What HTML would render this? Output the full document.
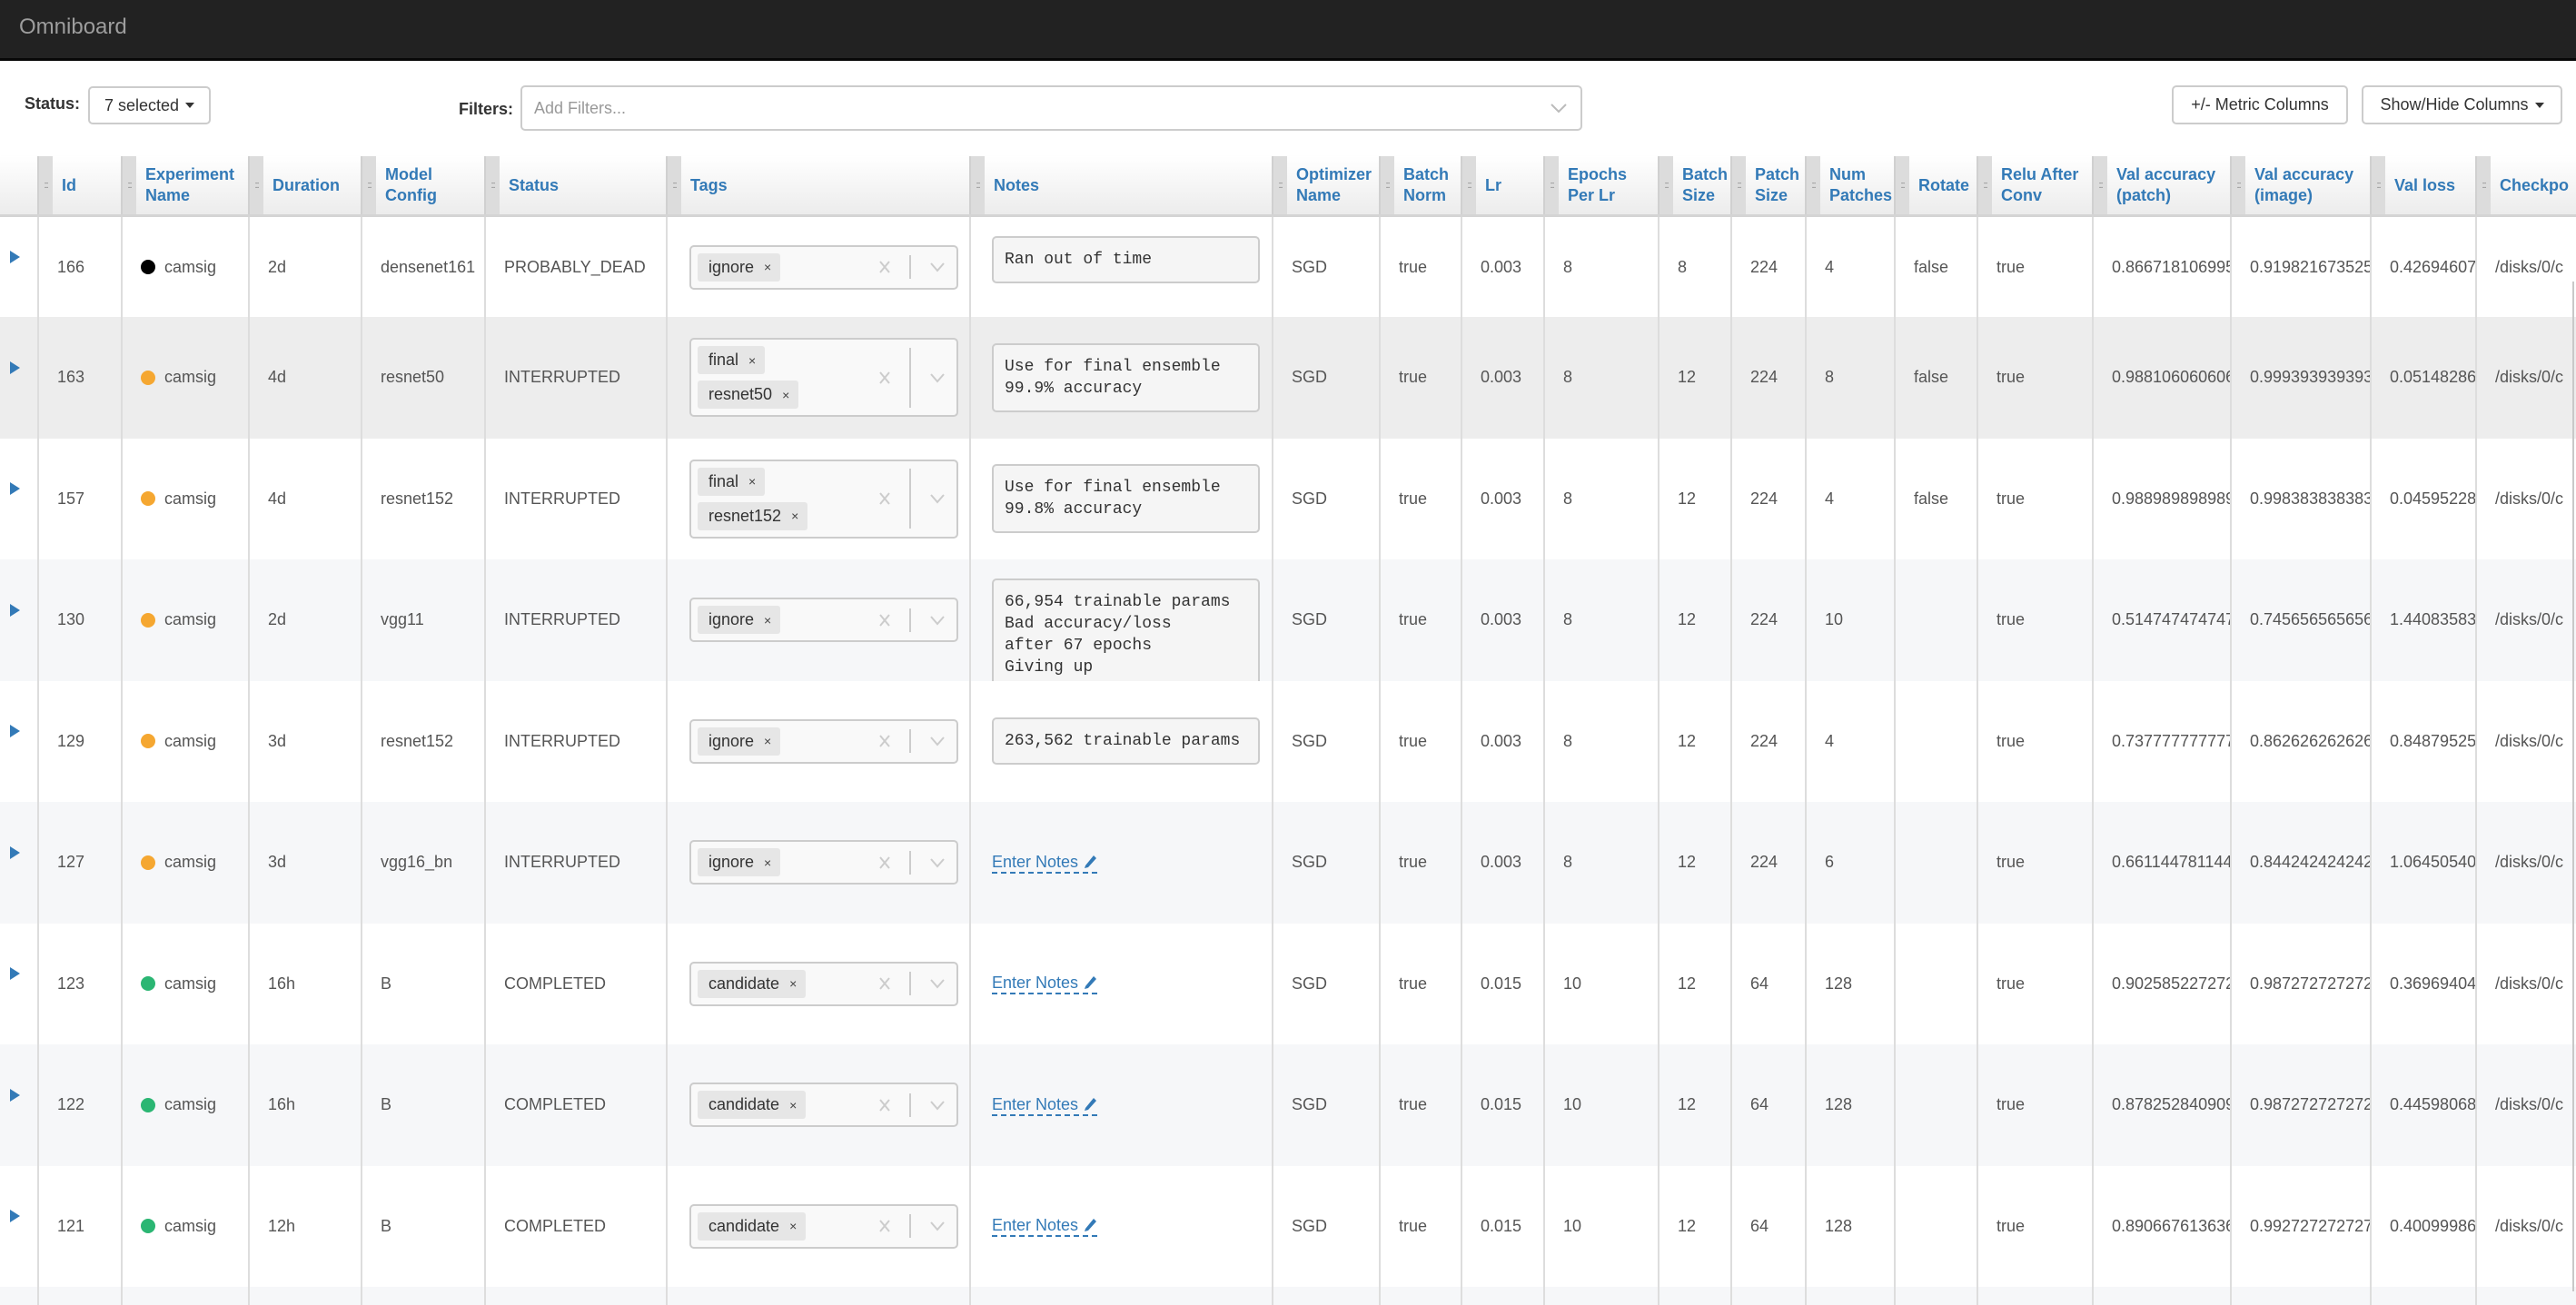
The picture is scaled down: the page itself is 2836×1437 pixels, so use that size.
<!DOCTYPE html>
<html><head><meta charset="utf-8">
<style>
*{box-sizing:border-box}
body{margin:0;width:2836px;height:1422px;overflow:hidden;background:#fff;font-family:"Liberation Sans",Arial,sans-serif;position:relative}
.nav{position:absolute;left:0;top:0;width:2836px;height:67px;background:#222;border-bottom:3px solid #080808}
.nav span{position:absolute;left:21px;top:16px;font-size:24px;color:#9d9d9d}
.lbl{position:absolute;font-weight:bold;font-size:18px;color:#333}
.btn{position:absolute;border:2px solid #ccc;border-radius:5px;background:#fff;font-size:18px;color:#333;display:flex;align-items:center;justify-content:center}
.caret{display:inline-block;width:0;height:0;border-left:5px solid transparent;border-right:5px solid transparent;border-top:6px solid #333;margin-left:7px}
.filt{position:absolute;left:573px;top:94px;width:1169px;height:50px;border:2px solid #ccc;border-radius:5px;background:#fff;font-size:18px;color:#999;padding-left:13px;display:flex;align-items:center}
.hdr{position:absolute;left:0;top:172px;width:2836px;height:67px;background:linear-gradient(#fff,#ececec);border-bottom:3px solid #d4d4d4;display:flex;box-shadow:0 2px 3px rgba(0,0,0,.08)}
.h{flex:none;display:flex;height:100%;overflow:hidden;white-space:nowrap}
.h .g{width:17px;flex:none;background:#dcdcdc;border-left:2px solid #d0d0d0;display:flex;align-items:center;justify-content:center;color:#777;font-size:11px;letter-spacing:-1px}
.h .t{padding-left:10px;display:flex;align-items:center;font-weight:bold;font-size:18px;line-height:23px;color:#337ab7;white-space:normal}
.rows{position:absolute;left:0;top:239px;width:2836px}
.r{display:flex;height:133.5px;overflow:hidden}
.c{flex:none;border-left:2px solid #ddd;padding-left:20px;display:flex;align-items:center;overflow:hidden;white-space:nowrap;font-size:18px;color:#555;height:100%}
.c0{border-left:none;padding-left:11px}
.w0{width:41px}.w1{width:92px}.w2{width:140px}.w3{width:124px}.w4{width:136px}.w5{width:200px}.w6{width:334px}.w7{width:333px}.w8{width:118px}.w9{width:90px}.w10{width:91px}.w11{width:126px}.w12{width:80px}.w13{width:82px}.w14{width:98px}.w15{width:91px}.w16{width:127px}.w17{width:152px}.w18{width:154px}.w19{width:116px}.w20{width:111px}
.tri{width:0;height:0;border-top:7px solid transparent;border-bottom:7px solid transparent;border-left:11px solid #337ab7;margin-top:-22px}
.dot{display:inline-block;width:16px;height:16px;border-radius:50%;margin-right:10px}
.sel{width:296px;margin-left:4px;border:2px solid #ccc;border-radius:5px;background:#f9f9f9;display:flex;align-items:center;position:relative;padding:7px 0 7px 7px}
.chips{flex:1;display:flex;flex-direction:column;gap:7px;align-items:flex-start}
.chip{background:#e6e6e6;border-radius:3px;height:31px;padding:0 10px 0 12px;display:flex;align-items:center;font-size:18px;color:#333}
.chip b{font-weight:normal;font-size:14px;margin-left:11px;color:#444}
.ind{display:flex;align-items:center;width:86px;justify-content:space-between;padding-right:12px;height:100%}
.sep{width:2px;height:26px;background:#ccc}
.note{margin-left:3px;width:295px;background:#f5f5f5;border:2px solid #ccc;border-radius:5px;padding:12px 12px;font-family:"Liberation Mono",monospace;font-size:18px;line-height:24px;color:#333;white-space:pre}
.en{color:#337ab7;border-bottom:2px dashed #337ab7;margin-left:3px;line-height:22px;display:flex;align-items:center}
</style></head><body>
<div class="nav"><span>Omniboard</span></div>
<div class="lbl" style="left:27px;top:104px">Status:</div>
<div class="btn" style="left:97px;top:95px;width:135px;height:42px">7 selected<span class="caret"></span></div>
<div class="lbl" style="left:505px;top:110px">Filters:</div>
<div class="filt">Add Filters...<svg style="position:absolute;right:14px;top:16px" width="20" height="14" viewBox="0 0 20 14"><polyline points="2,3 10,11 18,3" fill="none" stroke="#bbb" stroke-width="2"/></svg></div>
<div class="btn" style="left:2391px;top:94px;width:194px;height:43px">+/- Metric Columns</div>
<div class="btn" style="left:2600px;top:94px;width:221px;height:43px">Show/Hide Columns<span class="caret"></span></div>

<div class="hdr">
<div class="h w0"></div>
<div class="h w1"><div class="g">::</div><div class="t">Id</div></div>
<div class="h w2"><div class="g">::</div><div class="t">Experiment<br>Name</div></div>
<div class="h w3"><div class="g">::</div><div class="t">Duration</div></div>
<div class="h w4"><div class="g">::</div><div class="t">Model<br>Config</div></div>
<div class="h w5"><div class="g">::</div><div class="t">Status</div></div>
<div class="h w6"><div class="g">::</div><div class="t">Tags</div></div>
<div class="h w7"><div class="g">::</div><div class="t">Notes</div></div>
<div class="h w8"><div class="g">::</div><div class="t">Optimizer<br>Name</div></div>
<div class="h w9"><div class="g">::</div><div class="t">Batch<br>Norm</div></div>
<div class="h w10"><div class="g">::</div><div class="t">Lr</div></div>
<div class="h w11"><div class="g">::</div><div class="t">Epochs<br>Per Lr</div></div>
<div class="h w12"><div class="g">::</div><div class="t">Batch<br>Size</div></div>
<div class="h w13"><div class="g">::</div><div class="t">Patch<br>Size</div></div>
<div class="h w14"><div class="g">::</div><div class="t">Num<br>Patches</div></div>
<div class="h w15"><div class="g">::</div><div class="t">Rotate</div></div>
<div class="h w16"><div class="g">::</div><div class="t">Relu After<br>Conv</div></div>
<div class="h w17"><div class="g">::</div><div class="t">Val accuracy<br>(patch)</div></div>
<div class="h w18"><div class="g">::</div><div class="t">Val accuracy<br>(image)</div></div>
<div class="h w19"><div class="g">::</div><div class="t">Val loss</div></div>
<div class="h w20"><div class="g">::</div><div class="t">Checkpo</div></div>
</div>

<div class="rows">
<!-- 166 -->
<div class="r" style="height:110px;background:#fff">
<div class="c c0 w0"><i class="tri"></i></div><div class="c w1">166</div><div class="c w2"><i class="dot" style="background:#000"></i>camsig</div><div class="c w3">2d</div><div class="c w4">densenet161</div><div class="c w5">PROBABLY_DEAD</div>
<div class="c w6"><div class="sel"><div class="chips"><span class="chip">ignore<b>×</b></span></div><div class="ind"><svg width="14" height="16"><path d="M2 2L12 14M12 2L2 14" stroke="#ccc" stroke-width="2"/></svg><span class="sep"></span><svg width="18" height="12"><polyline points="2,2 9,10 16,2" fill="none" stroke="#ccc" stroke-width="2"/></svg></div></div></div>
<div class="c w7" style="align-items:flex-start;padding-top:21px"><div class="note">Ran out of time</div></div>
<div class="c w8">SGD</div><div class="c w9">true</div><div class="c w10">0.003</div><div class="c w11">8</div><div class="c w12">8</div><div class="c w13">224</div><div class="c w14">4</div><div class="c w15">false</div><div class="c w16">true</div><div class="c w17">0.866718106995</div><div class="c w18">0.919821673525</div><div class="c w19">0.42694607</div><div class="c w20">/disks/0/c</div>
</div>
<!-- 163 -->
<div class="r" style="background:#ededed">
<div class="c c0 w0"><i class="tri"></i></div><div class="c w1">163</div><div class="c w2"><i class="dot" style="background:#f5a731"></i>camsig</div><div class="c w3">4d</div><div class="c w4">resnet50</div><div class="c w5">INTERRUPTED</div>
<div class="c w6"><div class="sel"><div class="chips"><span class="chip">final<b>×</b></span><span class="chip">resnet50<b>×</b></span></div><div class="ind"><svg width="14" height="16"><path d="M2 2L12 14M12 2L2 14" stroke="#ccc" stroke-width="2"/></svg><span class="sep" style="height:66px"></span><svg width="18" height="12"><polyline points="2,2 9,10 16,2" fill="none" stroke="#ccc" stroke-width="2"/></svg></div></div></div>
<div class="c w7"><div class="note">Use for final ensemble
99.9% accuracy</div></div>
<div class="c w8">SGD</div><div class="c w9">true</div><div class="c w10">0.003</div><div class="c w11">8</div><div class="c w12">12</div><div class="c w13">224</div><div class="c w14">8</div><div class="c w15">false</div><div class="c w16">true</div><div class="c w17">0.988106060606</div><div class="c w18">0.999393939393</div><div class="c w19">0.05148286</div><div class="c w20">/disks/0/c</div>
</div>
<!-- 157 -->
<div class="r" style="background:#fff">
<div class="c c0 w0"><i class="tri"></i></div><div class="c w1">157</div><div class="c w2"><i class="dot" style="background:#f5a731"></i>camsig</div><div class="c w3">4d</div><div class="c w4">resnet152</div><div class="c w5">INTERRUPTED</div>
<div class="c w6"><div class="sel"><div class="chips"><span class="chip">final<b>×</b></span><span class="chip">resnet152<b>×</b></span></div><div class="ind"><svg width="14" height="16"><path d="M2 2L12 14M12 2L2 14" stroke="#ccc" stroke-width="2"/></svg><span class="sep" style="height:66px"></span><svg width="18" height="12"><polyline points="2,2 9,10 16,2" fill="none" stroke="#ccc" stroke-width="2"/></svg></div></div></div>
<div class="c w7"><div class="note">Use for final ensemble
99.8% accuracy</div></div>
<div class="c w8">SGD</div><div class="c w9">true</div><div class="c w10">0.003</div><div class="c w11">8</div><div class="c w12">12</div><div class="c w13">224</div><div class="c w14">4</div><div class="c w15">false</div><div class="c w16">true</div><div class="c w17">0.988989898989</div><div class="c w18">0.998383838383</div><div class="c w19">0.04595228</div><div class="c w20">/disks/0/c</div>
</div>
<!-- 130 -->
<div class="r" style="background:#f6f7f9">
<div class="c c0 w0"><i class="tri"></i></div><div class="c w1">130</div><div class="c w2"><i class="dot" style="background:#f5a731"></i>camsig</div><div class="c w3">2d</div><div class="c w4">vgg11</div><div class="c w5">INTERRUPTED</div>
<div class="c w6"><div class="sel"><div class="chips"><span class="chip">ignore<b>×</b></span></div><div class="ind"><svg width="14" height="16"><path d="M2 2L12 14M12 2L2 14" stroke="#ccc" stroke-width="2"/></svg><span class="sep"></span><svg width="18" height="12"><polyline points="2,2 9,10 16,2" fill="none" stroke="#ccc" stroke-width="2"/></svg></div></div></div>
<div class="c w7" style="align-items:flex-start;padding-top:21px"><div class="note">66,954 trainable params
Bad accuracy/loss
after 67 epochs
Giving up</div></div>
<div class="c w8">SGD</div><div class="c w9">true</div><div class="c w10">0.003</div><div class="c w11">8</div><div class="c w12">12</div><div class="c w13">224</div><div class="c w14">10</div><div class="c w15"></div><div class="c w16">true</div><div class="c w17">0.514747474747</div><div class="c w18">0.745656565656</div><div class="c w19">1.44083583</div><div class="c w20">/disks/0/c</div>
</div>
<!-- 129 -->
<div class="r" style="background:#fff">
<div class="c c0 w0"><i class="tri"></i></div><div class="c w1">129</div><div class="c w2"><i class="dot" style="background:#f5a731"></i>camsig</div><div class="c w3">3d</div><div class="c w4">resnet152</div><div class="c w5">INTERRUPTED</div>
<div class="c w6"><div class="sel"><div class="chips"><span class="chip">ignore<b>×</b></span></div><div class="ind"><svg width="14" height="16"><path d="M2 2L12 14M12 2L2 14" stroke="#ccc" stroke-width="2"/></svg><span class="sep"></span><svg width="18" height="12"><polyline points="2,2 9,10 16,2" fill="none" stroke="#ccc" stroke-width="2"/></svg></div></div></div>
<div class="c w7"><div class="note">263,562 trainable params</div></div>
<div class="c w8">SGD</div><div class="c w9">true</div><div class="c w10">0.003</div><div class="c w11">8</div><div class="c w12">12</div><div class="c w13">224</div><div class="c w14">4</div><div class="c w15"></div><div class="c w16">true</div><div class="c w17">0.737777777777</div><div class="c w18">0.862626262626</div><div class="c w19">0.84879525</div><div class="c w20">/disks/0/c</div>
</div>
<!-- 127 -->
<div class="r" style="background:#f6f7f9">
<div class="c c0 w0"><i class="tri"></i></div><div class="c w1">127</div><div class="c w2"><i class="dot" style="background:#f5a731"></i>camsig</div><div class="c w3">3d</div><div class="c w4">vgg16_bn</div><div class="c w5">INTERRUPTED</div>
<div class="c w6"><div class="sel"><div class="chips"><span class="chip">ignore<b>×</b></span></div><div class="ind"><svg width="14" height="16"><path d="M2 2L12 14M12 2L2 14" stroke="#ccc" stroke-width="2"/></svg><span class="sep"></span><svg width="18" height="12"><polyline points="2,2 9,10 16,2" fill="none" stroke="#ccc" stroke-width="2"/></svg></div></div></div>
<div class="c w7"><span class="en">Enter Notes&nbsp;<svg width="16" height="18" viewBox="0 0 16 18"><path d="M3 13L12 2l3 3-9 10-4 1z" fill="#337ab7"/></svg></span></div>
<div class="c w8">SGD</div><div class="c w9">true</div><div class="c w10">0.003</div><div class="c w11">8</div><div class="c w12">12</div><div class="c w13">224</div><div class="c w14">6</div><div class="c w15"></div><div class="c w16">true</div><div class="c w17">0.661144781144</div><div class="c w18">0.844242424242</div><div class="c w19">1.06450540</div><div class="c w20">/disks/0/c</div>
</div>
<!-- 123 -->
<div class="r" style="background:#fff">
<div class="c c0 w0"><i class="tri"></i></div><div class="c w1">123</div><div class="c w2"><i class="dot" style="background:#2bb673"></i>camsig</div><div class="c w3">16h</div><div class="c w4">B</div><div class="c w5">COMPLETED</div>
<div class="c w6"><div class="sel"><div class="chips"><span class="chip">candidate<b>×</b></span></div><div class="ind"><svg width="14" height="16"><path d="M2 2L12 14M12 2L2 14" stroke="#ccc" stroke-width="2"/></svg><span class="sep"></span><svg width="18" height="12"><polyline points="2,2 9,10 16,2" fill="none" stroke="#ccc" stroke-width="2"/></svg></div></div></div>
<div class="c w7"><span class="en">Enter Notes&nbsp;<svg width="16" height="18" viewBox="0 0 16 18"><path d="M3 13L12 2l3 3-9 10-4 1z" fill="#337ab7"/></svg></span></div>
<div class="c w8">SGD</div><div class="c w9">true</div><div class="c w10">0.015</div><div class="c w11">10</div><div class="c w12">12</div><div class="c w13">64</div><div class="c w14">128</div><div class="c w15"></div><div class="c w16">true</div><div class="c w17">0.902585227272</div><div class="c w18">0.987272727272</div><div class="c w19">0.36969404</div><div class="c w20">/disks/0/c</div>
</div>
<!-- 122 -->
<div class="r" style="background:#f6f7f9">
<div class="c c0 w0"><i class="tri"></i></div><div class="c w1">122</div><div class="c w2"><i class="dot" style="background:#2bb673"></i>camsig</div><div class="c w3">16h</div><div class="c w4">B</div><div class="c w5">COMPLETED</div>
<div class="c w6"><div class="sel"><div class="chips"><span class="chip">candidate<b>×</b></span></div><div class="ind"><svg width="14" height="16"><path d="M2 2L12 14M12 2L2 14" stroke="#ccc" stroke-width="2"/></svg><span class="sep"></span><svg width="18" height="12"><polyline points="2,2 9,10 16,2" fill="none" stroke="#ccc" stroke-width="2"/></svg></div></div></div>
<div class="c w7"><span class="en">Enter Notes&nbsp;<svg width="16" height="18" viewBox="0 0 16 18"><path d="M3 13L12 2l3 3-9 10-4 1z" fill="#337ab7"/></svg></span></div>
<div class="c w8">SGD</div><div class="c w9">true</div><div class="c w10">0.015</div><div class="c w11">10</div><div class="c w12">12</div><div class="c w13">64</div><div class="c w14">128</div><div class="c w15"></div><div class="c w16">true</div><div class="c w17">0.878252840909</div><div class="c w18">0.987272727272</div><div class="c w19">0.44598068</div><div class="c w20">/disks/0/c</div>
</div>
<!-- 121 -->
<div class="r" style="background:#fff">
<div class="c c0 w0"><i class="tri"></i></div><div class="c w1">121</div><div class="c w2"><i class="dot" style="background:#2bb673"></i>camsig</div><div class="c w3">12h</div><div class="c w4">B</div><div class="c w5">COMPLETED</div>
<div class="c w6"><div class="sel"><div class="chips"><span class="chip">candidate<b>×</b></span></div><div class="ind"><svg width="14" height="16"><path d="M2 2L12 14M12 2L2 14" stroke="#ccc" stroke-width="2"/></svg><span class="sep"></span><svg width="18" height="12"><polyline points="2,2 9,10 16,2" fill="none" stroke="#ccc" stroke-width="2"/></svg></div></div></div>
<div class="c w7"><span class="en">Enter Notes&nbsp;<svg width="16" height="18" viewBox="0 0 16 18"><path d="M3 13L12 2l3 3-9 10-4 1z" fill="#337ab7"/></svg></span></div>
<div class="c w8">SGD</div><div class="c w9">true</div><div class="c w10">0.015</div><div class="c w11">10</div><div class="c w12">12</div><div class="c w13">64</div><div class="c w14">128</div><div class="c w15"></div><div class="c w16">true</div><div class="c w17">0.890667613636</div><div class="c w18">0.992727272727</div><div class="c w19">0.40099986</div><div class="c w20">/disks/0/c</div>
</div>
<div class="r" style="background:#f6f7f9;height:20px">
<div class="c c0 w0"></div><div class="c w1"></div><div class="c w2"></div><div class="c w3"></div><div class="c w4"></div><div class="c w5"></div><div class="c w6"></div><div class="c w7"></div><div class="c w8"></div><div class="c w9"></div><div class="c w10"></div><div class="c w11"></div><div class="c w12"></div><div class="c w13"></div><div class="c w14"></div><div class="c w15"></div><div class="c w16"></div><div class="c w17"></div><div class="c w18"></div><div class="c w19"></div><div class="c w20"></div>
</div>
</div>
<div style="position:absolute;left:2832px;top:310px;width:2px;height:1112px;background:#c8c8c8"></div>
</body></html>
